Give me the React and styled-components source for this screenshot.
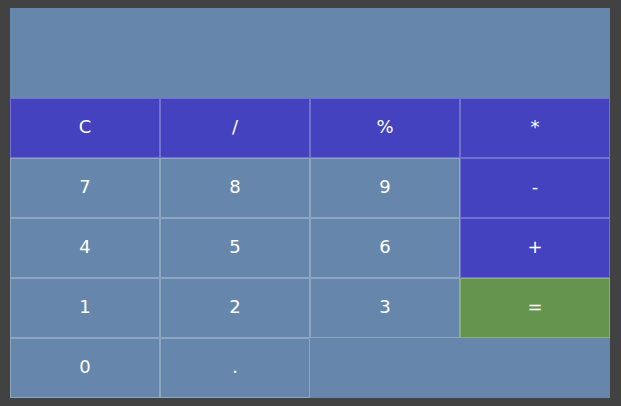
import styled, { createGlobalStyle } from 'styled-components';

const GlobalStyle = createGlobalStyle`
  html, body {
    margin: 0;
    padding: 0;
    background-color: #424242;
  }
  body {
    padding: 8px 0;
    font-family: 'DejaVu Sans', sans-serif;
  }
`;

const Calculator = styled.div`
  width: 600px;
  margin: 0 auto;
  position: relative;
  left: -0.5px;
  background-color: #6687ab;
`;

const Display = styled.div`
  height: 90px;
  color: white;
  font-size: 32px;
  display: flex;
  align-items: center;
  justify-content: flex-end;
  padding: 0 20px;
  box-sizing: border-box;
`;

const Keys = styled.div`
  display: grid;
  grid-template-columns: repeat(4, 150px);
  grid-auto-rows: 60px;
`;

const colors = {
  num: '#6687ab',
  op: '#4442bf',
  eq: '#65944f',
};

const Key = styled.button`
  box-sizing: border-box;
  margin: 0;
  padding: 0 0 3px;
  border: 1px solid rgba(255, 255, 255, 0.25);
  background-color: ${(props) => colors[props.kind || 'num']};
  color: white;
  font-family: 'DejaVu Sans', sans-serif;
  font-size: 18px;
  cursor: pointer;
  display: flex;
  align-items: center;
  justify-content: center;
`;

const keys = [
  ['C', 'op'], ['/', 'op'], ['%', 'op'], ['*', 'op'],
  ['7'], ['8'], ['9'], ['-', 'op'],
  ['4'], ['5'], ['6'], ['+', 'op'],
  ['1'], ['2'], ['3'], ['=', 'eq'],
  ['0'], ['.'],
];

const App = () => {
  return (
    <>
      <GlobalStyle />
      <Calculator>
        <Display />
        <Keys>
          {keys.map(([label, kind]) => (
            <Key key={label} kind={kind}>
              {label}
            </Key>
          ))}
        </Keys>
      </Calculator>
    </>
  );
};

export default App;
